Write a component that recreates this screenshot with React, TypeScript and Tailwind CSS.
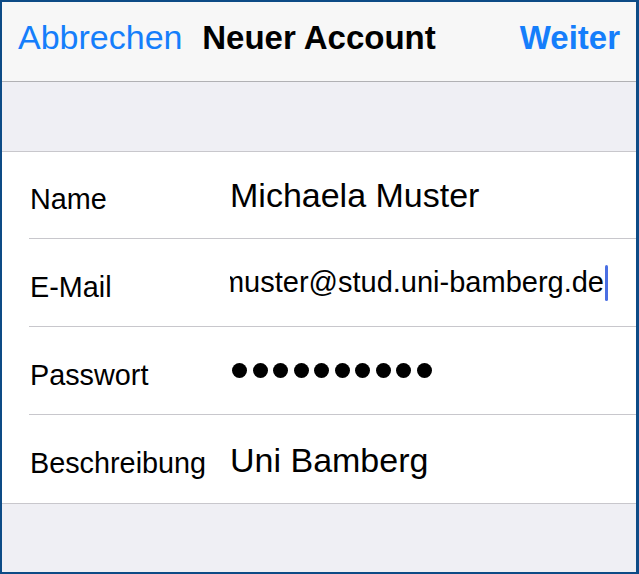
const font = { fontFamily: '"Liberation Sans", Arial, sans-serif' };

function Row({ label, children, first, last }: { label: string; children: React.ReactNode; first?: boolean; last?: boolean }) {
    return (
        <div className={last ? "pl-[27px] border-b border-[#c8c7cc]" : "pl-[27px]"}>
            <div className={`flex items-center pl-[1px] ${first ? "h-[87px]" : "h-[88px]"} ${last ? "h-[87px]" : "border-b border-[#c8c7cc]"}`}>
                {/* Label */}
                <div className="w-[200px] shrink-0 pt-[9px] text-[28.8px] leading-none text-black">{label}</div>
                {children}
            </div>
        </div>
    );
}

export default function App() {
    return (
        <div
            className="w-[639px] h-[574px] flex flex-col bg-[#efeff4] border-t-2 border-l-2 border-b-2 border-r-[3px] border-[#0d4b86] overflow-hidden"
            style={font}
        >
            {/* Navigation bar */}
            <div className="h-[80px] shrink-0 grid grid-cols-[1fr_auto_1fr] items-start bg-[#f7f7f7] border-b border-[#b1b1b4] px-[16px] pt-[18px]">
                <button className="justify-self-start text-[34px] leading-none text-[#157efb]">Abbrechen</button>
                <h1 className="mt-[1px] text-[33px] leading-none font-bold text-black">Neuer Account</h1>
                <button className="justify-self-end mt-[1px] text-[33px] leading-none font-bold text-[#157efb]">Weiter</button>
            </div>

            {/* Spacer */}
            <div className="h-[70px] shrink-0 border-b border-[#c8c7cc]" />

            {/* Form */}
            <div className="bg-white shrink-0">
                <Row label="Name" first>
                    <div className="text-[34px] leading-none text-black whitespace-nowrap">Michaela Muster</div>
                </Row>
                <Row label="E-Mail">
                    <div className="flex-1 min-w-0 overflow-hidden flex justify-end items-center pr-[28px]">
                        <span className="shrink-0 text-[29px] leading-none text-black whitespace-nowrap">muster@stud.uni-bamberg.de</span>
                        <span className="shrink-0 ml-[1px] w-[3px] h-[36px] rounded-full bg-[#4a6fe3]" />
                    </div>
                </Row>
                <Row label="Passwort">
                    <div className="flex items-center gap-[5.5px] pl-[2px]">
                        {[...Array(10)].map((_, i) => (
                            <span key={i} className="w-[15px] h-[15px] rounded-full bg-black" />
                        ))}
                    </div>
                </Row>
                <Row label="Beschreibung" last>
                    <div className="text-[34px] leading-none text-black whitespace-nowrap pt-[2px]">Uni Bamberg</div>
                </Row>
            </div>

            <div className="flex-1" />
        </div>
    );
}
